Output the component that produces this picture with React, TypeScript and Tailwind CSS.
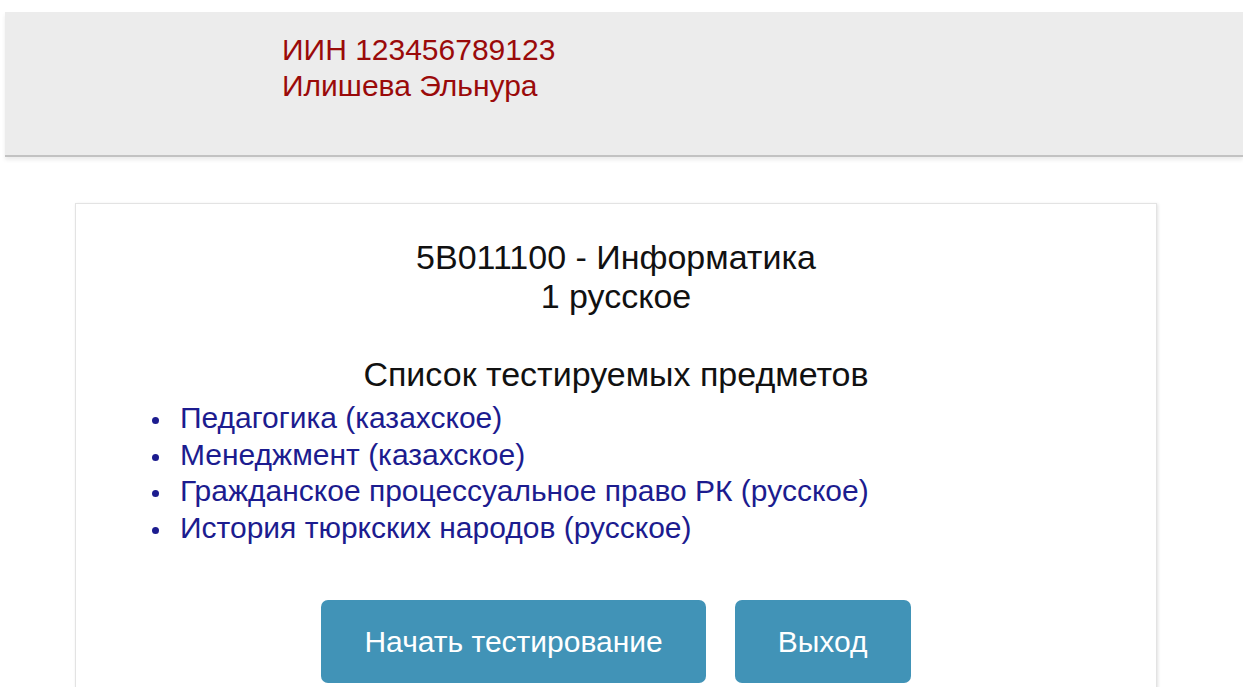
const subjects = [
  'Педагогика (казахское)',
  'Менеджмент (казахское)',
  'Гражданское процессуальное право РК (русское)',
  'История тюркских народов (русское)',
];

function Header() {
  return (
    <header className="ml-[5px] mt-[12px] h-[145px] border-b-2 border-[#c2c2c2] bg-[#ececec] pl-[277px] pt-[20px] shadow-[0_3px_4px_rgba(0,0,0,0.08)]">
      <div className="text-[30px] leading-[36px] text-[#9a0a0a]">
        <div>ИИН 123456789123</div>
        <div>Илишева Эльнура</div>
      </div>
    </header>
  );
}

export default function App() {
  return (
    <div className="min-h-screen bg-white font-['Liberation_Sans',Arial,sans-serif]">
      <Header />

      <main className="px-[75px] pt-[46px]">
        <div className="w-[1082px] border border-[#e3e3e3] px-[60px] pt-[34px] pb-[40px] shadow-[1px_1px_3px_rgba(0,0,0,0.12)]">
          <div className="text-center text-[34px] leading-[39px] text-[#111]">
            <div>5B011100 - Информатика</div>
            <div>1 русское</div>
          </div>

          <h2 className="mt-[38px] text-center text-[34px] leading-[40px] text-[#111]">
            Список тестируемых предметов
          </h2>

          <ul className="mt-[6px] pl-[16px] text-[30px] leading-[36.6px] text-[#1c1c8f]">
            {subjects.map((s) => (
              <li key={s} className="flex items-start">
                <span className="mt-[17px] mr-[21px] h-[7px] w-[7px] shrink-0 rounded-full bg-[#1c1c8f]" />
                <span>{s}</span>
              </li>
            ))}
          </ul>

          <div className="mt-[54px] flex justify-center gap-[29px]">
            <button className="h-[83px] rounded-[7px] bg-[#4193b7] px-[43px] text-[30px] text-white">
              Начать тестирование
            </button>
            <button className="h-[83px] rounded-[7px] bg-[#4193b7] px-[43px] text-[30px] text-white">
              Выход
            </button>
          </div>
        </div>
      </main>
    </div>
  );
}
